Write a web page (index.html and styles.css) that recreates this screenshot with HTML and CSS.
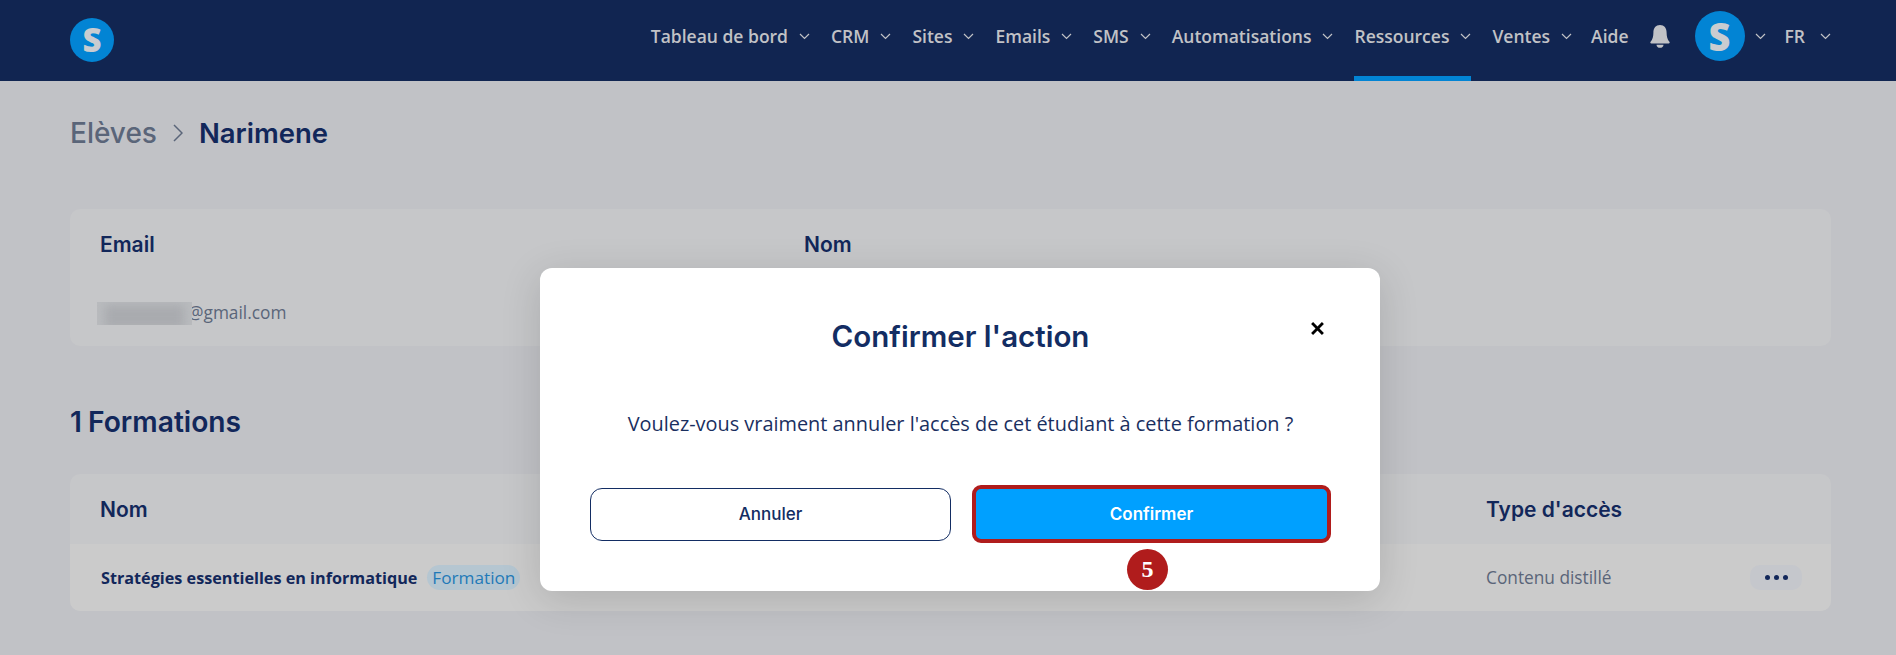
FILE: index.html
```html
<!DOCTYPE html>
<html lang="fr">
<head>
<meta charset="utf-8">
<title>Narimene</title>
<link rel="stylesheet" href="styles.css">
</head>
<body>
<header class="topbar">
  <div class="logo">S</div>
  <nav class="nav">
    <a class="nav-item">Tableau de bord<svg class="chev" viewBox="0 0 11 7"><path d="M1 1l4.500 4.500L10 1"/></svg></a>
    <a class="nav-item">CRM<svg class="chev" viewBox="0 0 11 7"><path d="M1 1l4.500 4.500L10 1"/></svg></a>
    <a class="nav-item">Sites<svg class="chev" viewBox="0 0 11 7"><path d="M1 1l4.500 4.500L10 1"/></svg></a>
    <a class="nav-item">Emails<svg class="chev" viewBox="0 0 11 7"><path d="M1 1l4.500 4.500L10 1"/></svg></a>
    <a class="nav-item">SMS<svg class="chev" viewBox="0 0 11 7"><path d="M1 1l4.500 4.500L10 1"/></svg></a>
    <a class="nav-item">Automatisations<svg class="chev" viewBox="0 0 11 7"><path d="M1 1l4.500 4.500L10 1"/></svg></a>
    <a class="nav-item active">Ressources<svg class="chev" viewBox="0 0 11 7"><path d="M1 1l4.500 4.500L10 1"/></svg></a>
    <a class="nav-item">Ventes<svg class="chev" viewBox="0 0 11 7"><path d="M1 1l4.500 4.500L10 1"/></svg></a>
    <a class="nav-item nav-help">Aide</a>
    <svg class="bell" viewBox="0 0 20 23"><path d="M10 0c4.200 0 6.600 3 6.600 7.500 0 4 .8 7 2.800 9.300.6.700.3 1.700-.7 1.700H1.300c-1 0-1.300-1-.7-1.700C2.600 14.500 3.400 11.500 3.400 7.500 3.400 3 5.800 0 10 0z"/><path d="M6.500 19.700h7c0 2-1.500 3.100-3.500 3.100s-3.500-1.100-3.500-3.100z"/></svg>
    <div class="avatar">S</div>
    <svg class="chev chev-avatar" viewBox="0 0 11 7"><path d="M1 1l4.500 4.500L10 1"/></svg>
    <a class="nav-item lang">FR<svg class="chev" viewBox="0 0 11 7"><path d="M1 1l4.500 4.500L10 1"/></svg></a>
  </nav>
</header>

<main class="page">
  <div class="crumbs">
    <span class="crumb-parent">Elèves</span>
    <svg class="crumb-sep" viewBox="0 0 10 18"><path d="M1 1l8 8-8 8"/></svg>
    <span class="crumb-current">Narimene</span>
  </div>

  <section class="card info-card">
    <div class="info-col info-email">
      <div class="label">Email</div>
      <div class="value"><span class="redact"><span class="redact-ink"></span></span>@gmail.com</div>
    </div>
    <div class="info-col">
      <div class="label">Nom</div>
    </div>
  </section>

  <h2 class="section-title">1 Formations</h2>

  <section class="card table-card">
    <div class="table-grid table-head">
      <div class="label">Nom</div>
      <div class="label">Type d'accès</div>
    </div>
    <div class="table-grid table-row">
      <div class="row-name">
        <span class="course">Stratégies essentielles en informatique</span>
        <span class="tag">Formation</span>
      </div>
      <div class="value">Contenu distillé</div>
      <div class="more"><i></i><i></i><i></i></div>
    </div>
  </section>
</main>

<div class="modal">
  <div class="modal-head">
    <h3 class="modal-title">Confirmer l'action</h3>
    <svg class="close" viewBox="0 0 12 12"><path d="M1 1l10 10M11 1L1 11"/></svg>
  </div>
  <p class="modal-text">Voulez-vous vraiment annuler l'accès de cet étudiant à cette formation ?</p>
  <div class="modal-actions">
    <button class="btn btn-cancel">Annuler</button>
    <button class="btn btn-confirm">Confirmer</button>
  </div>
  <div class="step">5</div>
</div>
</body>
</html>
```

FILE: styles.css
```css
* { box-sizing: border-box; }

html, body {
  margin: 0;
  height: 100%;
}

body {
  position: relative;
  height: 655px;
  overflow: hidden;
  background: #c1c2c6;
  font-family: "Open Sans", "Lato", sans-serif;
  color: #12275a;
}

.topbar {
  height: 81px;
  background: #112551;
  display: flex;
  align-items: center;
  justify-content: space-between;
  padding: 0 65px 0 70px;
}

.logo, .avatar {
  border-radius: 50%;
  background: #0284d4;
  color: #c9ccd0;
  font-family: "Open Sans", sans-serif;
  font-weight: 800;
  display: flex;
  align-items: center;
  justify-content: center;
}

.logo {
  width: 44px;
  height: 44px;
  font-size: 33px;
  margin-top: -2px;
}

.avatar {
  width: 50px;
  height: 50px;
  font-size: 38px;
  margin-left: 25px;
  margin-bottom: 9px;
}

.nav {
  display: flex;
  align-items: center;
  height: 100%;
}

.nav-item {
  position: relative;
  display: flex;
  align-items: center;
  height: 100%;
  margin-left: 21px;
  padding-bottom: 9px;
  color: #c1c2c6;
  font-size: 17.500px;
  font-weight: 600;
  white-space: nowrap;
}

.nav-help { margin-left: 19px; }

.nav-item.active::after {
  content: "";
  position: absolute;
  left: 0;
  right: 0;
  bottom: 0;
  height: 5px;
  background: #0284d4;
}

.chev {
  width: 11px;
  height: 7px;
  margin-left: 11px;
  fill: none;
  stroke: #c1c2c6;
  stroke-width: 1.200;
}

.chev-avatar {
  margin-left: 10px;
  margin-bottom: 9px;
}

.lang { margin-left: 19px; }
.lang .chev { margin-left: 15px; }

.bell {
  width: 20px;
  height: 23px;
  margin-left: 21px;
  margin-bottom: 9px;
  fill: #c1c2c6;
}

.page {
  padding: 0 65px 0 70px;
  display: flex;
  flex-direction: column;
}

.crumbs {
  display: flex;
  align-items: center;
  height: 34px;
  margin-top: 35px;
  font-family: "Inter", sans-serif;
  font-size: 28px;
  font-weight: 500;
}

.crumb-parent { color: #5a6579; }

.crumb-sep {
  width: 10px;
  height: 18px;
  margin: 0 16px 0 16px;
  fill: none;
  stroke: #5a6579;
  stroke-width: 1.500;
}

.crumb-current {
  color: #12275a;
  font-weight: 600;
  font-size: 27.500px;
}

.card {
  border-radius: 10px;
  overflow: hidden;
  background: #c6c7c9;
}

.info-card {
  height: 137px;
  margin-top: 59px;
  display: flex;
  padding: 24px 30px 0;
}

.info-email { width: 704px; }

.label {
  font-family: "Inter", sans-serif;
  font-size: 21px;
  font-weight: 600;
  line-height: 24px;
  color: #12275a;
}

.value {
  font-size: 17.300px;
  line-height: 24px;
  color: #5a6579;
  white-space: nowrap;
}

.info-card .value {
  display: flex;
  align-items: center;
  margin-top: 44px;
  margin-left: -3px;
}

.redact {
  width: 95px;
  height: 23px;
  margin-right: -4px;
  position: relative;
  z-index: 1;
  overflow: hidden;
  background: #b9bbbe;
}

.redact-ink {
  display: block;
  height: 100%;
  background: #a9abaf;
  filter: blur(5px);
  margin: 3px 8px;
}

.section-title {
  margin: 59px 0 0;
  font-family: "Inter", sans-serif;
  font-size: 28.200px;
  font-weight: 600;
  line-height: 34px;
  word-spacing: -1px;
  color: #12275a;
}

.table-card {
  height: 137px;
  margin-top: 35px;
}

.table-grid {
  display: grid;
  grid-template-columns: 1fr 264px 81px;
  align-items: center;
}

.table-head {
  height: 70px;
  padding: 2px 0 0 30px;
}

.table-row {
  height: 67px;
  background: #cbcbcb;
  padding-left: 31px;
}

.row-name {
  display: flex;
  align-items: center;
}

.course {
  font-size: 16.200px;
  font-weight: 700;
  color: #12275a;
  white-space: nowrap;
}

.tag {
  margin-left: 10px;
  height: 25px;
  width: 93px;
  display: flex;
  align-items: center;
  justify-content: center;
  border-radius: 13px;
  background: #b5c6d1;
  color: #1f7ab8;
  font-size: 17.200px;
}

.more {
  width: 52px;
  height: 25px;
  border-radius: 10px;
  background: #c5c7cc;
  display: flex;
  align-items: center;
  justify-content: center;
  gap: 4px;
}

.more i {
  width: 5px;
  height: 5px;
  border-radius: 50%;
  background: #12275a;
}

.modal {
  position: absolute;
  left: 540px;
  top: 268px;
  width: 840px;
  height: 323px;
  background: #fff;
  border-radius: 12px;
  box-shadow: 0 8px 40px rgba(0, 0, 0, .14);
  display: flex;
  flex-direction: column;
  padding: 0 49px 0 50px;
}

.modal-head {
  height: 70px;
  margin-top: 50px;
  display: flex;
  align-items: flex-start;
  justify-content: center;
  position: relative;
}

.modal-title {
  margin: 0;
  font-family: "Inter", sans-serif;
  font-size: 29.500px;
  font-weight: 600;
  line-height: 36px;
  color: #132d63;
}

.close {
  position: absolute;
  right: 7px;
  top: 4px;
  width: 13px;
  height: 13px;
  fill: none;
  stroke: #000;
  stroke-width: 2.600;
}

.modal-text {
  margin: 24px 0 0;
  text-align: center;
  font-size: 19.900px;
  line-height: 24px;
  color: #1a2f5f;
}

.modal-actions {
  margin-top: 49px;
  display: flex;
  align-items: center;
  gap: 21px;
}

.btn {
  font-family: "Inter", sans-serif;
  font-size: 17px;
  cursor: pointer;
  padding: 0;
}

.btn-cancel {
  width: 361px;
  height: 53px;
  background: #fff;
  color: #132d63;
  font-weight: 500;
  border: 1px solid #132d63;
  border-radius: 12px;
}

.btn-confirm {
  width: 359px;
  height: 58px;
  background: #00a0ff;
  color: #fff;
  font-weight: 600;
  border: 4px solid #b01c1c;
  border-radius: 9px;
}

.step {
  position: absolute;
  left: 587px;
  top: 281px;
  width: 41px;
  height: 41px;
  border-radius: 50%;
  background: #b01c1c;
  color: #fff;
  font-family: "Liberation Serif", serif;
  font-size: 24px;
  font-weight: 700;
  display: flex;
  align-items: center;
  justify-content: center;
}
```
